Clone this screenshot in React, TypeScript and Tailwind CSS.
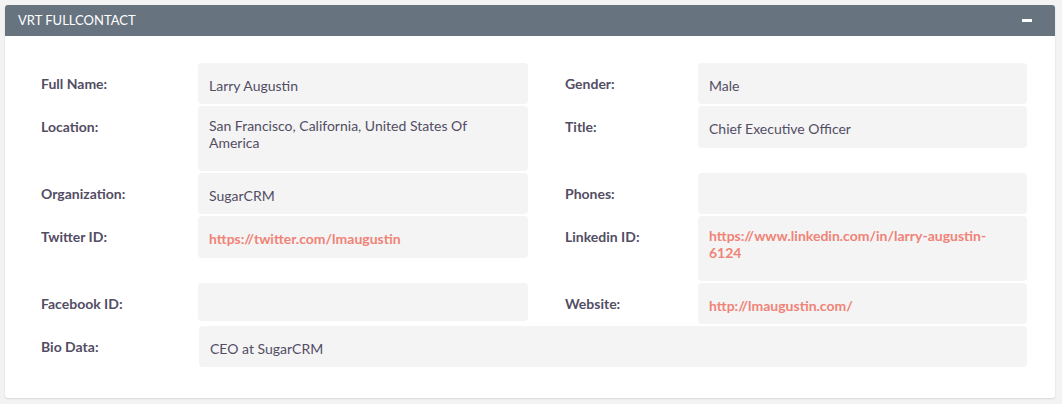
const LABEL = "text-[14px] leading-[18px] font-bold text-[#534d64] pt-[12px]";
const BOX = "rounded-[4px] bg-[#f4f4f4] pl-[11px] pr-[19px] text-[14px] text-[#534d64]";

type Cell = { label: string; value?: string; link?: boolean; h: number; lines?: number };

function Value({ c, w }: { c: Cell; w: string }) {
  const multi = (c.lines ?? 1) > 1;
  return (
    <div
      className={`${BOX} ${w} ${multi ? "pt-[11px] leading-[17px]" : "pt-[14px] leading-[18px]"}`}
      style={{ height: c.h }}
    >
      {c.value && (
        <span className={c.link ? "font-bold text-[#f08377]" : ""}>{c.value}</span>
      )}
    </div>
  );
}

function Row({ left, right }: { left: Cell; right: Cell }) {
  return (
    <div className="flex items-start">
      <div className={`w-[157px] shrink-0 ${LABEL}`}>{left.label}</div>
      <Value c={left} w="w-[330px] shrink-0" />
      <div className={`ml-[37px] w-[133px] shrink-0 ${LABEL}`}>{right.label}</div>
      <Value c={right} w="w-[329px] shrink-0" />
    </div>
  );
}

const ROWS: { left: Cell; right: Cell }[] = [
  {
    left: { label: "Full Name:", value: "Larry Augustin", h: 41 },
    right: { label: "Gender:", value: "Male", h: 41 },
  },
  {
    left: { label: "Location:", value: "San Francisco, California, United States Of America", h: 65, lines: 2 },
    right: { label: "Title:", value: "Chief Executive Officer", h: 42 },
  },
  {
    left: { label: "Organization:", value: "SugarCRM", h: 41 },
    right: { label: "Phones:", h: 41 },
  },
  {
    left: { label: "Twitter ID:", value: "https://twitter.com/lmaugustin", link: true, h: 42 },
    right: { label: "Linkedin ID:", value: "https://www.linkedin.com/in/larry-augustin-6124", link: true, h: 65, lines: 2 },
  },
  {
    left: { label: "Facebook ID:", h: 38 },
    right: { label: "Website:", value: "http://lmaugustin.com/", link: true, h: 41 },
  },
];

export default function App() {
  return (
    <div className="min-h-screen bg-[#f3f3f3] p-[5px] font-['Lato','Open_Sans',sans-serif]">
      <div className="w-[1050px] rounded-[3px] bg-white shadow-[0_1px_2px_rgba(0,0,0,0.12)]">
        <div className="flex h-[31px] items-center justify-between rounded-t-[3px] bg-[#677480] pl-[13px] pr-[23px]">
          <span className="text-[13px] text-white">VRT FULLCONTACT</span>
          <span className="block h-[3px] w-[10px] bg-white" />
        </div>
        <div className="flex flex-col gap-[2px] pb-[31px] pl-[36px] pr-[28px] pt-[27px]">
          {ROWS.map((r) => (
            <Row key={r.left.label} left={r.left} right={r.right} />
          ))}
          <div className="flex items-start">
            <div className={`w-[158px] shrink-0 ${LABEL}`}>Bio Data:</div>
            <div className={`${BOX} h-[41px] w-[828px] pt-[14px] leading-[18px]`}>CEO at SugarCRM</div>
          </div>
        </div>
      </div>
    </div>
  );
}
